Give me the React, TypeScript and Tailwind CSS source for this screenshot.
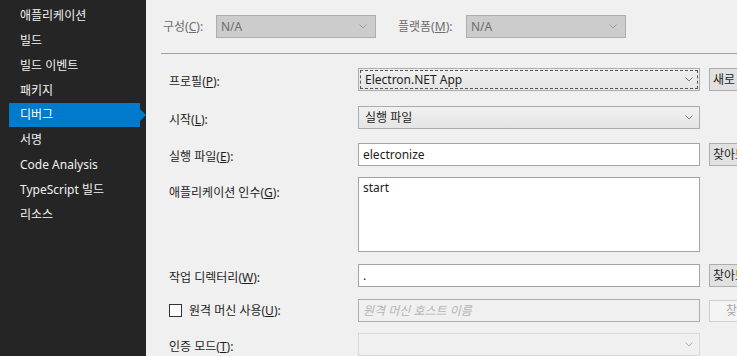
import React from "react";

const font = { fontFamily: '"Noto Sans", "Noto Sans CJK KR", sans-serif' };

const navItems = [
  "애플리케이션",
  "빌드",
  "빌드 이벤트",
  "패키지",
  "디버그",
  "서명",
  "Code Analysis",
  "TypeScript 빌드",
  "리소스",
];

function Chevron({ color = "#7a7a7a" }: { color?: string }) {
  return (
    <svg width="8" height="5" viewBox="0 0 8 5" className="shrink-0">
      <path d="M0.5 0.5 L4 4 L7.5 0.5" fill="none" stroke={color} strokeWidth="1" />
    </svg>
  );
}

function Label({ text, acc }: { text: string; acc: string }) {
  return (
    <span className="text-[12px] text-[#1e1e1e] whitespace-nowrap">
      {text}(<u>{acc}</u>):
    </span>
  );
}

function Button({ text, disabled }: { text: string; disabled?: boolean }) {
  return (
    <div
      className={
        disabled
          ? "ml-[9px] h-[22px] w-[75px] shrink-0 whitespace-nowrap border border-[#cfcfcf] bg-[#f4f4f4] pl-[16px] text-[12px] leading-[20px] text-[#a6a6a6]"
          : "ml-[9px] h-[23px] w-[75px] shrink-0 whitespace-nowrap border border-[#adadad] bg-[#e1e1e1] pl-[3px] text-[12px] leading-[21px] text-[#1e1e1e]"
      }
    >
      {text}
    </div>
  );
}

const field = "flex h-[23px] w-[342px] shrink-0 items-center";
const labelCol = "w-[189px] shrink-0";

export default function App() {
  return (
    <div className="flex h-[356px] w-[737px] overflow-hidden bg-[#f0f0f0]" style={font}>
      <aside className="relative w-[146px] shrink-0 bg-[#252526] pt-[3px]">
        {navItems.map((item) => {
          const active = item === "디버그";
          return (
            <div
              key={item}
              className={
                active
                  ? "relative ml-[9px] mr-[6px] flex h-[24px] items-center bg-[#007acc] pl-[11px] text-[12px] text-white"
                  : "ml-[9px] mr-[6px] flex h-[25px] items-center pl-[11px] text-[12px] text-[#f1f1f1]"
              }
            >
              {item}
              {active && (
                <span className="absolute right-[-6px] top-[6px] h-0 w-0 border-y-[6px] border-l-[6px] border-y-transparent border-l-[#007acc]" />
              )}
            </div>
          );
        })}
      </aside>

      <main className="min-w-0 flex-1 overflow-hidden">
        <div className="flex h-[53px] items-center pl-[17px]">
          <span className="w-[53px] shrink-0 text-[12px] text-[#6d6d6d] whitespace-nowrap">
            구성(<u>C</u>):
          </span>
          <div className="flex h-[23px] w-[160px] shrink-0 items-center justify-between border border-[#adadad] bg-[#cccccc] pl-[4px] pr-[8px] text-[12px] text-[#6d6d6d]">
            N/A
            <Chevron color="#a0a0a0" />
          </div>
          <span className="ml-[22px] w-[68px] shrink-0 text-[12px] text-[#6d6d6d] whitespace-nowrap">
            플랫폼(<u>M</u>):
          </span>
          <div className="flex h-[23px] w-[160px] shrink-0 items-center justify-between border border-[#adadad] bg-[#cccccc] pl-[4px] pr-[8px] text-[12px] text-[#6d6d6d]">
            N/A
            <Chevron color="#a0a0a0" />
          </div>
        </div>
        <div className="ml-[15px] h-px bg-[#a0a0a0]" />

        <div className="pl-[23px]">
          <div className="mt-[14px] flex h-[23px] items-center">
            <div className={labelCol}>
              <Label text="프로필" acc="P" />
            </div>
            <div className={`${field} border border-[#acacac] bg-gradient-to-b from-[#f0f0f0] to-[#e5e5e5] p-[1px]`}>
              <div className="flex h-full w-full items-center justify-between border border-dashed border-[#555] pl-[4px] pr-[4px] text-[12px] text-[#1e1e1e]">
                Electron.NET App
                <Chevron />
              </div>
            </div>
            <Button text="새로 만들기" />
          </div>

          <div className="mt-[15px] flex h-[23px] items-center">
            <div className={labelCol}>
              <Label text="시작" acc="L" />
            </div>
            <div className={`${field} justify-between border border-[#acacac] bg-gradient-to-b from-[#f0f0f0] to-[#e5e5e5] pl-[6px] pr-[6px] text-[12px] text-[#1e1e1e]`}>
              실행 파일
              <Chevron />
            </div>
          </div>

          <div className="mt-[14px] flex h-[23px] items-center">
            <div className={labelCol}>
              <Label text="실행 파일" acc="E" />
            </div>
            <div className={`${field} border border-[#a5a5a5] bg-white pl-[4px] text-[12px] text-[#1e1e1e]`}>
              electronize
            </div>
            <Button text="찾아보기..." />
          </div>

          <div className="mt-[11px] flex h-[75px] items-start">
            <div className={`${labelCol} pt-[2px]`}>
              <Label text="애플리케이션 인수" acc="G" />
            </div>
            <div className="h-[75px] w-[342px] shrink-0 border border-[#a5a5a5] bg-white pl-[4px] pt-[1px] text-[12px] text-[#1e1e1e]">
              start
            </div>
          </div>

          <div className="mt-[12px] flex h-[23px] items-center">
            <div className={labelCol}>
              <Label text="작업 디렉터리" acc="W" />
            </div>
            <div className={`${field} border border-[#a5a5a5] bg-white pl-[4px] text-[12px] text-[#1e1e1e]`}>
              .
            </div>
            <Button text="찾아보기..." />
          </div>

          <div className="mt-[12px] flex h-[23px] items-center">
            <div className={`${labelCol} flex items-center`}>
              <span className="mr-[7px] h-[13px] w-[13px] shrink-0 border border-[#333] bg-white" />
              <Label text="원격 머신 사용" acc="U" />
            </div>
            <div className={`${field} border border-[#adadad] bg-[#f0f0f0] pl-[4px] text-[12px] italic text-[#b4b4b4]`}>
              원격 머신 호스트 이름
            </div>
            <Button text="찾아보기..." disabled />
          </div>

          <div className="mt-[11px] flex h-[23px] items-center">
            <div className={labelCol}>
              <Label text="인증 모드" acc="T" />
            </div>
            <div className={`${field} justify-end border border-[#d9d9d9] bg-[#f0f0f0] pr-[6px]`}>
              <Chevron color="#b0b0b0" />
            </div>
          </div>
        </div>
      </main>
    </div>
  );
}
